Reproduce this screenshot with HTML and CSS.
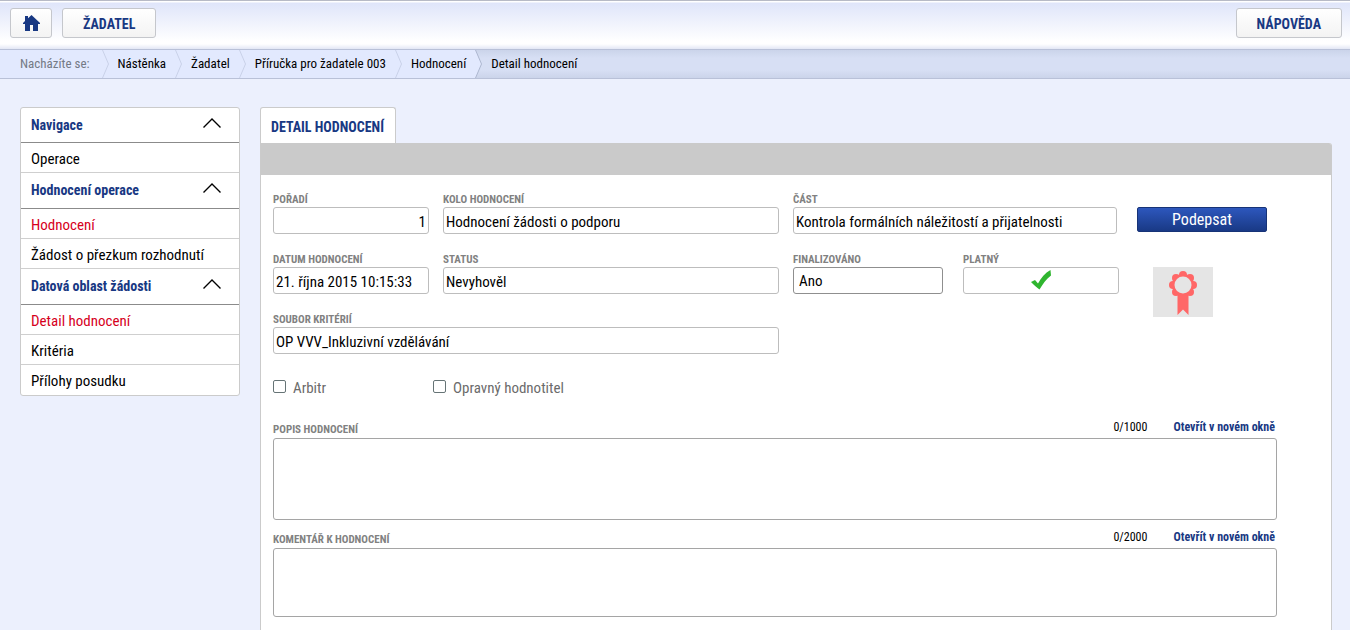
FILE: index.html
```html
<!DOCTYPE html>
<html lang="cs">
<head>
<meta charset="utf-8">
<meta name="viewport" content="width=device-width, initial-scale=1">
<title>Detail hodnocení</title>
<link rel="stylesheet" href="styles.css">
</head>
<body>
<header class="toolbar">
  <button class="tool-button home-button" type="button" aria-label="Domů">
    <svg class="home-icon" viewBox="0 0 17 17" aria-hidden="true"><path d="M8.500 0 17 8v1h-2v7h-5v-6H7v6H2V9H0V8l2-2V1h3v2.300z"/></svg>
  </button>
  <button class="tool-button" type="button">ŽADATEL</button>
  <button class="tool-button help-button" type="button">NÁPOVĚDA</button>
</header>
<nav class="breadcrumb" aria-label="Drobečková navigace">
  <div class="crumb crumb-label">Nacházíte se:</div>
  <svg class="crumb-arrow" viewBox="0 0 8 28" aria-hidden="true"><path d="M.5 0 6.500 14 .5 28"/></svg>
  <a class="crumb" href="#">Nástěnka</a>
  <svg class="crumb-arrow" viewBox="0 0 8 28" aria-hidden="true"><path d="M.5 0 6.500 14 .5 28"/></svg>
  <a class="crumb" href="#">Žadatel</a>
  <svg class="crumb-arrow" viewBox="0 0 8 28" aria-hidden="true"><path d="M.5 0 6.500 14 .5 28"/></svg>
  <a class="crumb" href="#">Příručka pro žadatele 003</a>
  <svg class="crumb-arrow" viewBox="0 0 8 28" aria-hidden="true"><path d="M.5 0 6.500 14 .5 28"/></svg>
  <a class="crumb" href="#">Hodnocení</a>
  <div class="crumb-current">
    <svg class="crumb-arrow crumb-arrow-current" viewBox="0 0 8 28" aria-hidden="true"><path class="crumb-fill" d="M0 0h.5L6.500 14 .5 28H0z"/><path d="M.5 0 6.500 14 .5 28"/></svg>
    <a class="crumb" href="#" aria-current="page">Detail hodnocení</a>
  </div>
</nav>
<div class="layout">
  <nav class="sidebar" aria-label="Navigace">
    <button class="side-heading" type="button">Navigace<svg class="chevron" viewBox="0 0 18 10" aria-hidden="true"><path d="M.5 9.500 9 1l8.500 8.500"/></svg></button>
    <a class="side-link" href="#">Operace</a>
    <button class="side-heading" type="button">Hodnocení operace<svg class="chevron" viewBox="0 0 18 10" aria-hidden="true"><path d="M.5 9.500 9 1l8.500 8.500"/></svg></button>
    <a class="side-link active" href="#">Hodnocení</a>
    <a class="side-link" href="#">Žádost o přezkum rozhodnutí</a>
    <button class="side-heading" type="button">Datová oblast žádosti<svg class="chevron" viewBox="0 0 18 10" aria-hidden="true"><path d="M.5 9.500 9 1l8.500 8.500"/></svg></button>
    <a class="side-link active" href="#">Detail hodnocení</a>
    <a class="side-link" href="#">Kritéria</a>
    <a class="side-link" href="#">Přílohy posudku</a>
  </nav>
  <main class="content">
    <h1 class="tab">DETAIL HODNOCENÍ</h1>
    <section class="panel">
      <div class="panel-bar"></div>
      <form class="form">
        <div class="row">
          <div class="field small"><label for="order">POŘADÍ</label><input class="number" id="order" type="text" value="1"></div>
          <div class="field wide"><label for="round">KOLO HODNOCENÍ</label><input id="round" type="text" value="Hodnocení žádosti o podporu"></div>
          <div class="field part"><label for="part">ČÁST</label><input id="part" type="text" value="Kontrola formálních náležitostí a přijatelnosti"></div>
          <button class="sign-button" type="button">Podepsat</button>
        </div>
        <div class="row">
          <div class="field small"><label for="date">DATUM HODNOCENÍ</label><input id="date" type="text" value="21. října 2015 10:15:33"></div>
          <div class="field wide"><label for="status">STATUS</label><input id="status" type="text" value="Nevyhověl"></div>
          <div class="field final"><label for="final">FINALIZOVÁNO</label><select id="final"><option>Ano</option></select></div>
          <div class="field small valid"><span class="label">PLATNÝ</span>
            <div class="valid-box" role="img" aria-label="Ano"><svg class="check" viewBox="0 0 20 20" aria-hidden="true"><path d="M0 12 4 10l3 3.500C10 8 14 3 19.500 0l.5 5.500C15 9 12 14 8.500 19.500 6 18 3 15 0 12z"/></svg></div>
          </div>
          <button class="seal" type="button" aria-label="Podpis">
            <svg class="seal-icon" viewBox="0 0 28 44" aria-hidden="true">
              <g class="seal-fill"><path d="M8.500 20h11v24L14 38.500 8.500 44z"/><circle cx="14" cy="14" r="11"/><circle cx="14" cy="4" r="4"/><circle cx="21" cy="7" r="4"/><circle cx="24" cy="14" r="4"/><circle cx="21" cy="21" r="4"/><circle cx="7" cy="7" r="4"/><circle cx="4" cy="14" r="4"/><circle cx="7" cy="21" r="4"/></g>
              <circle class="seal-hole" cx="14" cy="14" r="8.500"/>
            </svg>
          </button>
        </div>
        <div class="row">
          <div class="field criteria"><label for="criteria">SOUBOR KRITÉRIÍ</label><input id="criteria" type="text" value="OP VVV_Inkluzivní vzdělávání"></div>
        </div>
        <div class="checks">
          <label class="check-label"><input type="checkbox">Arbitr</label>
          <label class="check-label"><input type="checkbox">Opravný hodnotitel</label>
        </div>
        <div class="text-block">
          <div class="text-head"><label for="description">POPIS HODNOCENÍ</label><span class="counter">0/1000</span><a class="open-link" href="#">Otevřít v novém okně</a></div>
          <textarea class="description" id="description"></textarea>
        </div>
        <div class="text-block">
          <div class="text-head"><label for="comment">KOMENTÁŘ K HODNOCENÍ</label><span class="counter">0/2000</span><a class="open-link" href="#">Otevřít v novém okně</a></div>
          <textarea class="comment" id="comment"></textarea>
        </div>
      </form>
    </section>
  </main>
</div>
</body>
</html>
```

FILE: styles.css
```css
* { box-sizing: border-box; }
body {
  display: flex;
  flex-direction: column;
  min-height: 100vh;
  margin: 0;
  background: #ecf0fd;
  color: #000;
  font: 15px/20px "Roboto Condensed", "Liberation Sans Narrow", Roboto, sans-serif;
}
button, input, select, textarea { font: inherit; }
a { color: inherit; text-decoration: none; }
svg { display: block; flex: none; }

.toolbar {
  display: flex;
  gap: 10px;
  padding: 7px 8px 11px 10px;
  border-top: 1px solid #b7bac6;
  background: linear-gradient(#fff 0, #fff 1px, #dfe5fa 2px, #fff 40px, #fff 43px, #e3e7f5 100%);
}
.tool-button {
  display: flex;
  align-items: center;
  justify-content: center;
  height: 30px;
  padding: 1px 20px 0;
  border: 1px solid #c5c7cc;
  border-radius: 3px;
  background: linear-gradient(#fff, #f3f3f3);
  color: #183883;
  font-size: 14px;
  font-weight: 700;
}
.home-button { width: 42px; padding: 0; }
.home-icon { width: 17px; height: 17px; fill: #183883; }
.help-button { margin-left: auto; }

.breadcrumb {
  display: flex;
  height: 30px;
  padding-left: 20px;
  border: 1px solid #b9c1d8;
  border-width: 1px 0;
  background: #e2e9fe;
  font-size: 13px;
  line-height: 28px;
  white-space: nowrap;
}
.crumb { margin-right: 9px; }
.crumb-label { margin-right: 12px; color: #747a85; }
.crumb-arrow { width: 8px; height: 28px; margin-right: 8px; fill: none; stroke: #c9d1e8; }
.crumb-current {
  display: flex;
  flex: 1;
  background: linear-gradient(#cbd4ea, #d7dff4 8px, #d7dff4 20px, #cbd4ea);
}
.crumb-arrow-current { stroke: #adb7cf; }
.crumb-fill { fill: #e2e9fe; stroke: none; }

.layout { display: flex; flex: 1; gap: 20px; padding: 28px 18px 0 20px; }
.sidebar {
  flex: none;
  align-self: flex-start;
  width: 220px;
  border: 1px solid #cbcbcb;
  border-radius: 3px;
  background: #fff;
}
.side-heading {
  display: flex;
  align-items: center;
  justify-content: space-between;
  width: 100%;
  height: 36px;
  padding: 0 18px 1px 10px;
  border: 0;
  border-bottom: 1px solid #8b8b8b;
  background: none;
  color: #183883;
  font-size: 14px;
  font-weight: 700;
}
.side-heading:first-child { height: 35px; }
.chevron { width: 18px; height: 10px; margin-bottom: 4px; fill: none; stroke: #000; stroke-width: 1.4; }
.side-link {
  display: block;
  height: 30px;
  padding: 6px 10px 3px;
  border-bottom: 1px solid #cfcfcf;
}
.side-link:last-child { border-bottom: 0; }
.active { color: #d6001c; }

.content { display: flex; flex: 1; flex-direction: column; min-width: 0; }
.tab {
  align-self: flex-start;
  height: 36px;
  margin: 0;
  padding: 9px 11px 7px 10px;
  border: 1px solid #cbcbcb;
  border-bottom: 0;
  border-radius: 3px 3px 0 0;
  background: #fff;
  color: #183883;
  font-size: 14px;
  line-height: 20px;
}
.panel {
  flex: 1;
  border: 1px solid #cbcbcb;
  border-width: 0 1px;
  border-radius: 0 3px 0 0;
  background: #fff;
}
.panel-bar { height: 32px; border-radius: 0 2px 0 0; background: #cacaca; }
.form { padding: 18px 54px 12px 12px; }
.row { display: flex; gap: 14px; height: 60px; }
.field { min-width: 0; }
.field label, .label, .text-head label {
  display: block;
  height: 14px;
  color: #818181;
  font-size: 11px;
  font-weight: 700;
  line-height: 14px;
  white-space: nowrap;
}
.small { flex: 0 1 156px; }
.wide { flex: 0 1 336px; }
.part { flex: 0 1 324px; }
.final { flex: 0 1 150px; }
.criteria { flex: 0 1 506px; }
.valid { margin-left: 6px; }
.field input, .field select, .valid-box {
  display: block;
  width: 100%;
  height: 27px;
  padding: 2px 2px 0;
  border: 1px solid #bdbdbd;
  border-radius: 3px;
  background: #fff;
  color: #000;
}
.field select { padding: 0 5px; border-color: #8f8f8f; appearance: none; }
.field .number { text-align: right; }
.valid-box { display: flex; justify-content: center; }
.check { width: 20px; height: 20px; fill: #2fb52f; }
.sign-button {
  flex: 0 0 130px;
  height: 25px;
  margin: 14px 0 0 6px;
  padding: 0;
  border: 1px solid #173377;
  border-radius: 2px;
  background: linear-gradient(#2d57bd, #193985);
  color: #fff;
  font-size: 16px;
}
.seal {
  display: flex;
  justify-content: center;
  width: 60px;
  height: 50px;
  margin: 14px 0 0 20px;
  padding: 4px 0 0;
  border: 0;
  background: #e5e5e5;
}
.seal-icon { width: 28px; height: 44px; }
.seal-fill { fill: #ff6767; }
.seal-hole { fill: #e5e5e5; }

.checks { display: flex; height: 48px; color: #6b6b6b; }
.check-label { display: flex; align-items: flex-start; gap: 7px; width: 160px; padding-top: 5px; white-space: nowrap; }
.check-label input {
  flex: none;
  width: 13px;
  height: 13px;
  margin: 2px 0 0;
  border: 1px solid #667476;
  border-radius: 2px;
  background: #fff;
  appearance: none;
}
.text-head {
  display: flex;
  align-items: flex-end;
  height: 17px;
  padding: 0 2px 1px 0;
  font-size: 12px;
}
.counter { margin: 0 26px 0 auto; }
.open-link { color: #183883; font-weight: 700; }
textarea {
  display: block;
  width: 100%;
  padding: 2px;
  border: 1px solid #a5a5a5;
  border-radius: 3px;
  background: #fff;
  resize: none;
}
.text-block { margin-bottom: 11px; }
.description { height: 82px; }
.comment { height: 69px; }
```
